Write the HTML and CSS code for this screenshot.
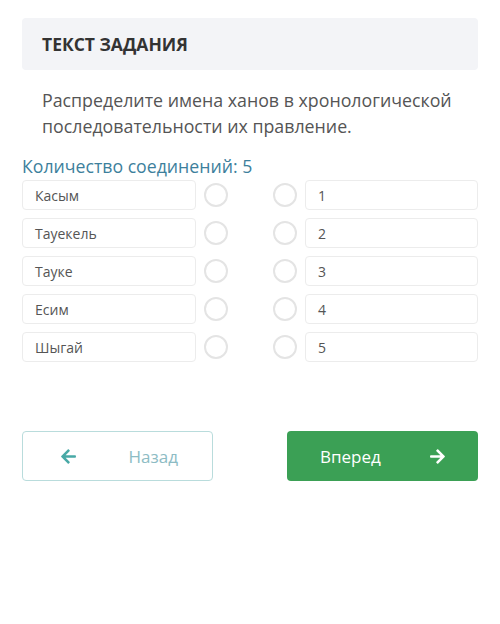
FILE: index.html
```html
<!DOCTYPE html>
<html lang="ru">
<head>
    <meta charset="UTF-8">
    <meta name="viewport" content="width=device-width, initial-scale=1.0">
    <title>Задание</title>
    <link rel="stylesheet" href="styles.css">
</head>
<body>

    <div class="page">
        <!-- Task header -->
        <div class="task-title">ТЕКСТ ЗАДАНИЯ</div>

        <p class="task-text">Распределите имена ханов в хронологической последовательности их правление.</p>

        <div class="count">Количество соединений: 5</div>

        <!-- Matching rows -->
        <div class="match">
            <div class="row">
                <div class="item">Касым</div>
                <span class="dot"></span>
                <span class="dot"></span>
                <div class="item num">1</div>
            </div>
            <div class="row">
                <div class="item">Тауекель</div>
                <span class="dot"></span>
                <span class="dot"></span>
                <div class="item num">2</div>
            </div>
            <div class="row">
                <div class="item">Тауке</div>
                <span class="dot"></span>
                <span class="dot"></span>
                <div class="item num">3</div>
            </div>
            <div class="row">
                <div class="item">Есим</div>
                <span class="dot"></span>
                <span class="dot"></span>
                <div class="item num">4</div>
            </div>
            <div class="row">
                <div class="item">Шыгай</div>
                <span class="dot"></span>
                <span class="dot"></span>
                <div class="item num">5</div>
            </div>
        </div>

        <!-- Navigation -->
        <div class="nav">
            <button class="btn btn-back">
                <svg class="arrow" viewBox="0 0 448 512" width="17" height="17"><path d="M257.5 445.1l-22.2 22.2c-9.4 9.4-24.6 9.4-33.9 0L7 273c-9.4-9.4-9.4-24.6 0-33.9L201.4 44.7c9.4-9.4 24.6-9.4 33.9 0l22.2 22.2c9.5 9.5 9.3 25-.4 34.3L136.6 216H424c13.3 0 24 10.7 24 24v32c0 13.3-10.7 24-24 24H136.6l120.5 114.8c9.8 9.3 10 24.8.4 34.3z"/></svg>
                <span>Назад</span>
            </button>
            <button class="btn btn-next">
                <span>Вперед</span>
                <svg class="arrow" viewBox="0 0 448 512" width="17" height="17"><path d="M190.5 66.9l22.2-22.2c9.4-9.4 24.6-9.4 33.9 0L441 239c9.4 9.4 9.4 24.6 0 33.9L246.6 467.3c-9.4 9.4-24.6 9.4-33.9 0l-22.2-22.2c-9.5-9.5-9.3-25 .4-34.3L311.4 296H24c-13.3 0-24-10.7-24-24v-32c0-13.3 10.7-24 24-24h287.4L190.9 101.2c-9.8-9.3-10-24.8-.4-34.3z"/></svg>
            </button>
        </div>
    </div>

</body>
</html>
```

FILE: styles.css
```css
/* General Styles */
* {
    margin: 0;
    padding: 0;
    box-sizing: border-box;
}

body {
    font-family: "Open Sans", Arial, sans-serif;
    background-color: #fff;
    color: #444;
}

.page {
    padding: 18px 22px 0 22px;
}

/* Task header */
.task-title {
    background-color: #f3f4f7;
    border-radius: 4px;
    height: 52px;
    padding: 0 20px;
    display: flex;
    align-items: center;
    font-size: 17.5px;
    font-weight: 700;
    color: #333;
}

.task-text {
    margin-top: 17px;
    padding: 0 20px;
    font-size: 17.8px;
    line-height: 26px;
    color: #555;
}

.count {
    margin-top: 16px;
    font-size: 17.7px;
    line-height: 22px;
    color: #3d7f9c;
}

/* Matching */
.match {
    margin-top: 3px;
    display: flex;
    flex-direction: column;
    gap: 8px;
}

.row {
    display: flex;
    align-items: center;
    height: 30px;
}

.item {
    width: 174px;
    height: 30px;
    border: 1px solid #ececec;
    border-radius: 4px;
    padding: 0 12px;
    display: flex;
    align-items: center;
    font-size: 14px;
    color: #555;
}

.item.num {
    width: 173px;
}

.dot {
    width: 24px;
    height: 24px;
    border: 2px solid #e4e4e4;
    border-radius: 50%;
    flex-shrink: 0;
}

.row .dot:nth-of-type(1) {
    margin-left: 8px;
}

.row .dot:nth-of-type(2) {
    margin-left: 45px;
    margin-right: 8px;
}

/* Navigation */
.nav {
    margin-top: 69px;
    display: flex;
    justify-content: space-between;
}

.btn {
    width: 191px;
    height: 50px;
    border-radius: 4px;
    font-family: inherit;
    font-size: 17px;
    display: flex;
    align-items: center;
    cursor: pointer;
}

.btn-back {
    background-color: #fff;
    border: 1px solid #b9dcdc;
    color: #8dbcc4;
    padding: 0 34px 0 37px;
    justify-content: space-between;
}

.btn-back .arrow {
    fill: #48a9a6;
}

.btn-next {
    background-color: #3ba055;
    border: none;
    color: #fff;
    padding: 0 32px 0 33px;
    justify-content: space-between;
}

.btn-next .arrow {
    fill: #fff;
}
```
